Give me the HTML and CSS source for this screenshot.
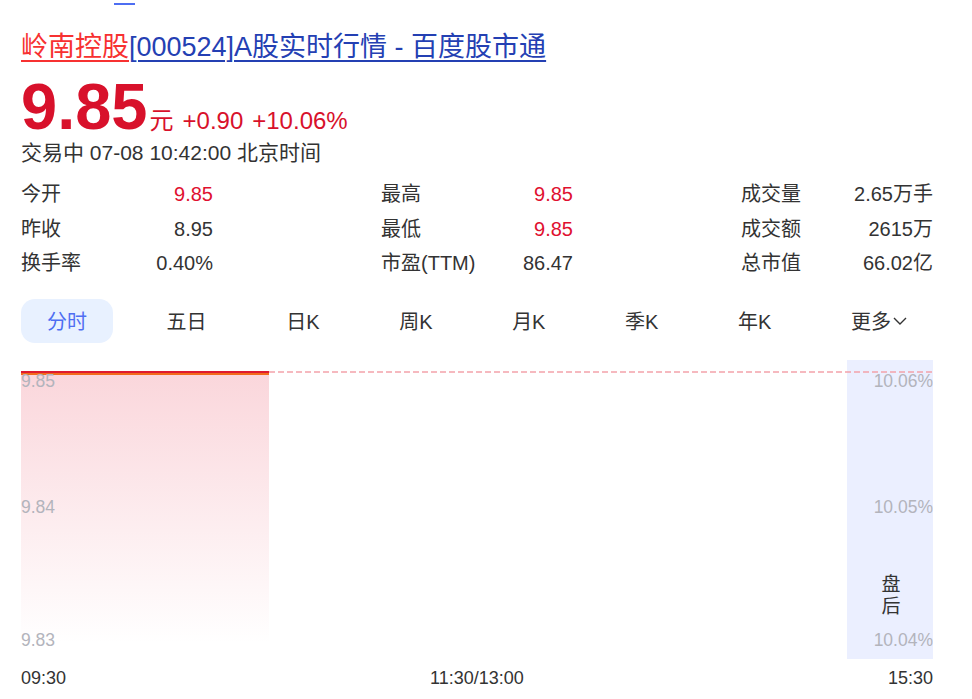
FILE: index.html
```html
<!DOCTYPE html>
<html lang="zh-CN">
<head>
<meta charset="utf-8">
<title>岭南控股[000524]A股实时行情 - 百度股市通</title>
<link rel="stylesheet" href="styles.css">
</head>
<body>
<div class="page">
  <div class="nav"><span class="nav-mark"></span></div>

  <h1 class="title"><a class="title-name" href="#">岭南控股</a><a class="title-rest" href="#">[000524]A股实时行情 - 百度股市通</a></h1>

  <div class="quote">
    <span class="price">9.85</span>
    <span class="unit">元</span>
    <span class="change">+0.90</span>
    <span class="change">+10.06%</span>
  </div>
  <div class="status">交易中 07-08 10:42:00 北京时间</div>

  <div class="stats">
    <div class="stat"><span>今开</span><span class="up">9.85</span></div>
    <div class="stat"><span>最高</span><span class="up">9.85</span></div>
    <div class="stat"><span>成交量</span><span>2.65万手</span></div>
    <div class="stat"><span>昨收</span><span>8.95</span></div>
    <div class="stat"><span>最低</span><span class="up">9.85</span></div>
    <div class="stat"><span>成交额</span><span>2615万</span></div>
    <div class="stat"><span>换手率</span><span>0.40%</span></div>
    <div class="stat"><span>市盈(TTM)</span><span>86.47</span></div>
    <div class="stat"><span>总市值</span><span>66.02亿</span></div>
  </div>

  <div class="tabs">
    <span class="tab tab-active">分时</span>
    <span class="tab">五日</span>
    <span class="tab">日K</span>
    <span class="tab">周K</span>
    <span class="tab">月K</span>
    <span class="tab">季K</span>
    <span class="tab">年K</span>
    <span class="tab">更多<svg class="chevron" width="14" height="8" viewBox="0 0 14 8"><path d="M1 1l6 6 6-6" fill="none" stroke="#333" stroke-width="1.4"/></svg></span>
  </div>

  <div class="chart">
    <svg width="912" height="300" viewBox="0 0 912 300">
      <defs>
        <linearGradient id="areaFill" x1="0" y1="0" x2="0" y2="1">
          <stop offset="0" stop-color="#e8344d" stop-opacity="0.2"/>
          <stop offset="1" stop-color="#e8344d" stop-opacity="0"/>
        </linearGradient>
      </defs>
      <!-- after-hours band -->
      <rect x="826" y="0" width="86" height="299" fill="#ebefff"/>
      <!-- limit-up reference line -->
      <line x1="248" y1="12" x2="912" y2="12" stroke="#f4a2ab" stroke-width="1.5" stroke-dasharray="6 3"/>
      <!-- price area -->
      <rect x="0" y="14" width="248" height="270" fill="url(#areaFill)"/>
      <line x1="0" y1="14" x2="248" y2="14" stroke="#f36a1c" stroke-width="2"/>
      <line x1="0" y1="12" x2="248" y2="12" stroke="#de1a2f" stroke-width="2"/>
      <!-- axis labels -->
      <g class="axis">
        <text x="0" y="27">9.85</text>
        <text x="0" y="153">9.84</text>
        <text x="0" y="285.5">9.83</text>
        <text x="912" y="27" text-anchor="end">10.06%</text>
        <text x="912" y="153" text-anchor="end">10.05%</text>
        <text x="912" y="285.5" text-anchor="end">10.04%</text>
      </g>
      <text class="band-label" x="870" y="214">盘后</text>
    </svg>
  </div>

  <div class="times">
    <span>09:30</span>
    <span>11:30/13:00</span>
    <span>15:30</span>
  </div>
</div>
</body>
</html>
```

FILE: styles.css
```css
* {
  box-sizing: border-box;
}

body {
  margin: 0;
  background: #fff;
  color: #333;
  font-family: "Liberation Sans", Arial, "Noto Sans CJK SC", sans-serif;
}

.page {
  width: 972px;
  padding: 0 39px 0 21px;
}

.nav {
  height: 6px;
  padding-top: 3px;
}

.nav-mark {
  display: block;
  margin-left: 93px;
  width: 21px;
  height: 2px;
  background: #4e6ef2;
}

.title {
  margin: 23px 0 0;
  font-size: 27px;
  font-weight: normal;
  line-height: 36px;
  white-space: nowrap;
}

.title a {
  text-decoration: underline;
  text-decoration-thickness: 2px;
  text-underline-offset: 4px;
}

.title-name {
  color: #f73131;
}

.title-rest {
  color: #2440b3;
}

.quote {
  display: flex;
  align-items: baseline;
  height: 64px;
  margin-top: 10px;
  color: #d8112b;
}

.price {
  font-size: 65px;
  font-weight: bold;
  line-height: 64px;
}

.unit {
  margin-left: 2px;
  font-size: 24px;
}

.change {
  margin-left: 9px;
  font-size: 24px;
}

.status {
  margin-top: 0;
  font-size: 21px;
  line-height: 28px;
}

.stats {
  display: grid;
  grid-template-columns: repeat(3, 192px);
  justify-content: space-between;
  margin-top: 10px;
  font-size: 20px;
  line-height: 34.5px;
}

.stat {
  display: flex;
  justify-content: space-between;
}

.up {
  color: #e0102f;
}

.tabs {
  display: flex;
  justify-content: space-between;
  margin-top: 18px;
  font-size: 20px;
}

.tab {
  display: flex;
  align-items: center;
  height: 44px;
  padding: 0 26px;
  border-radius: 14px;
}

.tab-active {
  background: #e8f1ff;
  color: #4e6ef2;
}

.chevron {
  margin-left: 2px;
}

.chart {
  margin-top: 17px;
  height: 300px;
}

.chart svg {
  display: block;
}

.axis text {
  font-family: "Liberation Sans", Arial, sans-serif;
  font-size: 17.5px;
  fill: #b3b4bc;
}

.band-label {
  font-family: "Noto Sans CJK SC", sans-serif;
  font-size: 19px;
  letter-spacing: 3px;
  writing-mode: vertical-rl;
  fill: #333;
}

.times {
  display: flex;
  justify-content: space-between;
  margin-top: 8px;
  font-size: 18px;
  line-height: 20px;
}
```
